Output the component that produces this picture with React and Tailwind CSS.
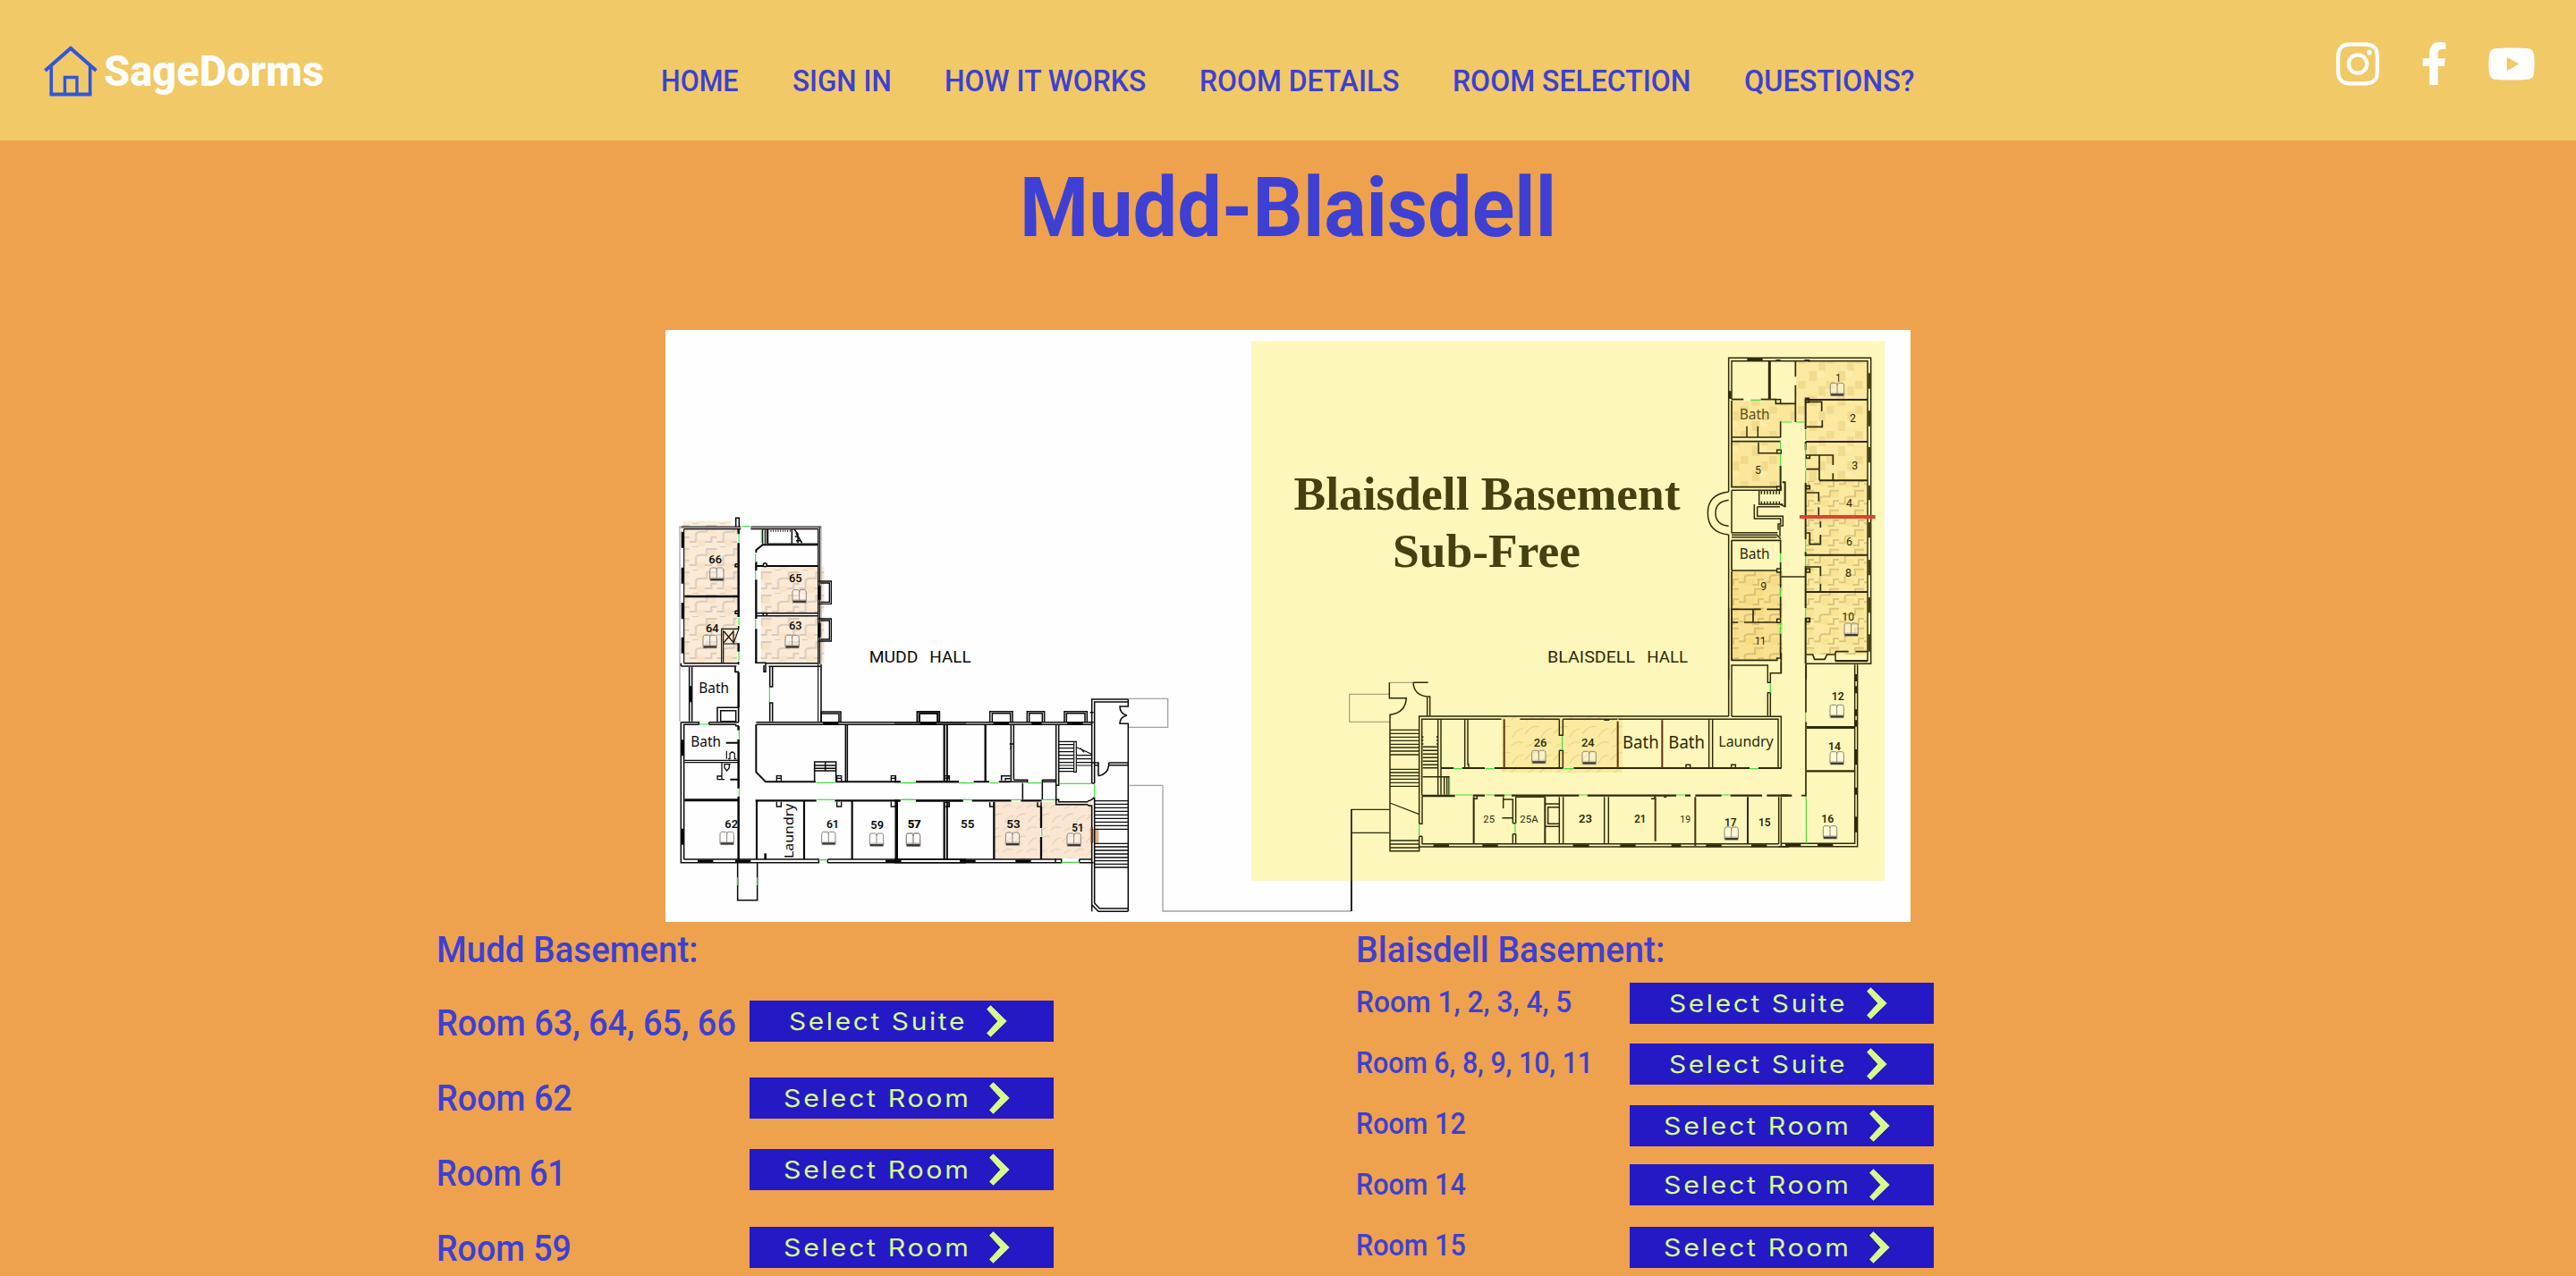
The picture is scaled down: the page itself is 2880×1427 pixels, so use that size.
import React, { useLayoutEffect, useRef, useState } from 'react';
import { FaInstagram, FaFacebookF, FaYoutube } from 'react-icons/fa';

/* A single line of text, condensed or widened to take exactly `width` pixels. */
function Fit({ width, className = '', children }) {
  const ref = useRef(null);
  const [scale, setScale] = useState(1);
  useLayoutEffect(() => {
    setScale(width / ref.current.offsetWidth);
  }, [width]);
  return (
    <span className={`block whitespace-nowrap ${className}`} style={{ width }}>
      <span ref={ref} className="inline-block origin-left" style={{ transform: `scaleX(${scale})` }}>
        {children}
      </span>
    </span>
  );
}

const NAV = [
  { label: 'HOME', width: 87, space: 'ml-[1px]' },
  { label: 'SIGN IN', width: 111, space: 'ml-[60px]' },
  { label: 'HOW IT WORKS', width: 225, space: 'ml-[58.5px]' },
  { label: 'ROOM DETAILS', width: 223, space: 'ml-[60.5px]' },
  { label: 'ROOM SELECTION', width: 266, space: 'ml-[60px]' },
  { label: 'QUESTIONS?', width: 190, space: 'ml-[59.5px]' },
];

const MUDD_ROOMS = [
  ['Room 63, 64, 65, 66', 335],
  ['Room 62', 152],
  ['Room 61', 145],
  ['Room 59', 151],
];

const MUDD_BUTTONS = [
  ['suite', 'mt-[88px]'],
  ['room', 'mt-[40px]'],
  ['room', 'mt-[34px]'],
  ['room', 'mt-[41px]'],
];

const BLAISDELL_ROOMS = [
  ['Room 1, 2, 3, 4, 5', 241.5],
  ['Room 6, 8, 9, 10, 11', 265.5],
  ['Room 12', 123],
  ['Room 14', 123],
  ['Room 15', 123],
];

const BLAISDELL_BUTTONS = [
  ['suite', 'mt-[68px]'],
  ['suite', 'mt-[22px]'],
  ['room', 'mt-[23px]'],
  ['room', 'mt-[20px]'],
  ['room', 'mt-[24px]'],
];

function House() {
  return (
    <svg className="block h-[58px] w-[62px]" viewBox="0 0 62 58" fill="none" stroke="#2f56da" strokeWidth="3.6">
      <path d="M2.5 28 31 3 59.500 28" strokeWidth="4" />
      <path d="M9.300 23V54M52.700 23V54" />
      <path d="M7.500 54.500H54.500" strokeWidth="4" />
      <path d="M24.500 54V35.500H38V54" strokeWidth="3.400" />
    </svg>
  );
}

function Header() {
  return (
    <header className="flex h-[157px] bg-[#f1c967]">
      <div className="flex w-[738px] items-start pl-[48px] pt-[51px]">
        <House />
        <Fit width={246} className="ml-[6px] text-[48px] font-extrabold leading-[58px] text-white">SageDorms</Fit>
      </div>
      <nav className="flex w-[1440px] pt-[70px] text-[34px] font-medium leading-[40px] text-[#3d40d2]">
        {NAV.map((n) => (
          <a key={n.label} className={n.space}>
            <Fit width={n.width}>{n.label}</Fit>
          </a>
        ))}
      </nav>
      <div className="flex h-[142px] items-center pl-[431px] text-white">
        <FaInstagram className="h-[55px] w-[54px]" />
        <FaFacebookF className="ml-[43px] h-[48px] w-[31px]" />
        <FaYoutube className="ml-[44px] h-[55px] w-[54px]" />
      </div>
    </header>
  );
}

function SelectButton({ kind, space }) {
  const suite = kind === 'suite';
  return (
    <button
      className={`flex h-[46px] w-[340px] shrink-0 items-center bg-[#2419c5] text-[#d9f98a] ${space} ${suite ? 'pl-[44px]' : 'pl-[38px]'}`}
    >
      <Fit width={suite ? 199 : 210} className="text-left font-['Inter'] text-[27.5px] font-normal leading-[46px] tracking-[2.4px]">
        {suite ? 'Select Suite' : 'Select Room'}
      </Fit>
      <svg className={`h-[36px] w-[23px] ${suite ? 'ml-[22px]' : 'ml-[20px]'}`} viewBox="0 0 23 36">
        <path d="M4.500.800 22.200 18 4.500 35.200.600 31.400 12.800 18 .600 4.600Z" fill="currentColor" stroke="currentColor" strokeLinejoin="round" />
      </svg>
    </button>
  );
}

function Bed({ x, y }) {
  return (
    <g transform={`translate(${x} ${y})`}>
      <rect x="0" y="32" width="49" height="14" rx="3" fill="#77716a" opacity="0.450" />
      <path d="M1 38V10Q1 1 6 1H20Q24 1 24 8Q24 1 28 1H42Q47 1 47 10V38Z" fill="#fff" fillOpacity="0.350" stroke="#8a867e" strokeWidth="3" />
      <path d="M24 4V36" stroke="#8a867e" strokeWidth="3" />
      <path d="M3 40.500H46" stroke="#35322c" strokeWidth="6" />
    </g>
  );
}

function Carpet({ x, y, w, h, fill, pattern }) {
  return (
    <g>
      <rect x={x} y={y} width={w} height={h} fill={fill} />
      <rect x={x} y={y} width={w} height={h} fill={`url(#${pattern})`} />
    </g>
  );
}

/* Room numbers and captions: [text, left, baseline, width, size, weight] */
function Labels({ items, fill, font }) {
  return items.map(([t, x, y, w, size, weight], i) => (
    <text key={i} x={x} y={y} textLength={w} lengthAdjust="spacingAndGlyphs" fontSize={size} fontWeight={weight} fontFamily={font} fill={fill}>
      {t}
    </text>
  ));
}

const INK = '#0a0a0a';
const OLIVE = '#2e2a08';
const GREEN = '#3fe03f';
const SANS = 'Roboto, sans-serif';
const NOTO = '"Noto Sans", sans-serif';

function MuddWest() {
  const peach = '#fbead6';
  return (
    <g transform="translate(740 560) scale(0.333333)" fill="none" stroke={INK} strokeWidth="4.600">
      <g stroke="none">
        <Carpet x={70} y={68} w={162} h={28} fill="#fbeee0" pattern="step" />
        <Carpet x={76} y={96} w={176} h={222} fill={peach} pattern="step" />
        <Carpet x={76} y={324} w={176} h={220} fill={peach} pattern="step" />
        <Carpet x={332} y={222} w={212} h={154} fill={peach} pattern="step" />
        <Carpet x={332} y={388} w={212} h={154} fill={peach} pattern="step" />
      </g>
      <path d="M60 84V740M534 86V548" stroke="#b9b4b4" />
      <path d="M64 91H265M298 91H534" stroke="#b9a9b0" strokeWidth="6" />
      <path d="M64 87H265M74 95H265M298 87H534M298 95H524" strokeWidth="3.500" />
      <path d="M74 95V545M524 95V740M529 90V548" strokeWidth="3.500" />
      <path d="M534 548V740M64 555H250M74 545H258M64 545V555M92 558V740M101 558V740" />
      <path d="M69 104V158M69 224V278M69 342V397M69 458V512M97 622V676M69 802V856M69 1100V1154" strokeWidth="8" />
      <path d="M248 88V58H259V88" />
      <path d="M257 96V112M257 142V390M257 478V506M257 575V694M257 756V770M257 800V965M257 992V1205" strokeWidth="7.500" />
      <path d="M257 430V420M257 540V550M246 556V574H258M257 694V742" strokeWidth="5" />
      <path d="M76 321H257" strokeWidth="8" />
      <path d="M246 212H257M246 212V221H257M246 370H257M246 370V379H257" />
      <path d="M258 430H200V545M206 436V545M206 480H258M240 434V478L258 430M208 438L240 476M240 438L208 476" strokeWidth="3.500" />
      <path d="M338 96V146M346 96V146M352 96V144M356 96V144H524" strokeWidth="3.500" />
      <path d="M366 98V104M374 98V104M382 98V104M390 98V104M398 98V104M406 98V104M414 98V104M422 98V104M430 98V104" strokeWidth="3" />
      <path d="M436 96V144M444 96 456 112V142M450 108 470 142M446 120H458M450 134H464" />
      <path d="M316 174V166L338 148H524" strokeWidth="6" />
      <path d="M316 205V234M316 265V396M316 430V545" strokeWidth="7" />
      <path d="M316 219H524" strokeWidth="6" />
      <circle cx="346" cy="215" r="6" fill="#fff" />
      <path d="M316 377H524M316 386H524M340 377V386M352 377V386" />
      <path d="M313 544H348V574H342V552M350 545H524M358 556H534M362 556V624H371V556M362 740V678H371V740" />
      <path d="M526 270H568V346H526M532 276H562V340H532M526 396H568V471H526M532 402H562V465H532" strokeWidth="4" />
      <path d="M529 285V332M529 410V458" strokeWidth="8" />
      <path d="M186 742V694H258M197 740V704H248V740H197" />
      <path d="M64 743H124V751H74V1203M64 743V1214H526V1203H74M158 743H258M158 751H250M158 743V751M246 755H258" />
      <path d="M215 812H258M229 935H258" strokeWidth="6" />
      <path d="M217 840V866M228 866V848L236 842 244 848V866M222 866H230M242 866H250" strokeWidth="3.500" />
      <path d="M76 871H257M76 878H257M201 880V935M186 935V924H201M186 935H210M208 884H230M210 886V896L218 906 226 896V886" strokeWidth="3.800" />
      <path d="M76 1004H257" strokeWidth="9" />
      <path d="M120 1209H172M246 1209H298M750 1209H802M1000 1209H1020" strokeWidth="9" />
      <path d="M254 1214V1340H320V1214" />
      <path d="M347 1183V1203" strokeWidth="8" />
      <path d="M316 743H1020M316 751H1020M534 743V708H600V743M536 714H594V742M857 743V708H931V743M864 743V714H925V743" />
      <path d="M540 747H592M867 747H920" strokeWidth="8" />
      <path d="M316 751V910L348 943H516" strokeWidth="6" />
      <path d="M616 751V943M622 751V943M948 751V943M957 751V943" />
      <path d="M512 943V876H584V943M514 888H582M514 898H582M514 906H582M548 878V906" />
      <path d="M385 941V923H400V941M385 931H400M587 941V923H602V941M587 931H602M769 941V923H784V941M769 931H784M948 941V923H963V931H950M385 1010V1026H400V1010M587 1010V1026H602V1010M769 1010V1026H784V1010M950 1012H963V1026H950" strokeWidth="4" />
      <path d="M582 943H800M852 943H996" strokeWidth="6" />
      <path d="M314 1006H518M580 1006H800M852 1006H1010" strokeWidth="7" />
      <path d="M318 1006V1203M477 1006V1203M638 1006V1203" strokeWidth="6.500" />
      <path d="M788 1006V1203" strokeWidth="8" />
      <path d="M948 1010V1203M957 1010V1203M556 1203H1020M556 1214H1020M556 1203V1214" />
      <path
        d="M270 86H294M258 110V140M258 392V418M258 506V538M334 98V142M314 176V206M314 234V264M314 398V428M361 626V676M124 750H158M259 770V798M259 965V992M518 946H580M802 946H852M996 946H1020M520 1003H580M802 1003H852M1010 1003H1020M526 1205H556M254 1264V1290M320 1264V1290"
        stroke={GREEN}
        strokeWidth="3.500"
      />
      <g stroke="none">
        <Bed x={160} y={224} />
        <Bed x={137} y={450} />
        <Bed x={437} y={298} />
        <Bed x={413} y={450} />
        <Bed x={194} y={1110} />
        <Bed x={535} y={1110} />
        <Bed x={696} y={1115} />
        <Bed x={819} y={1115} />
        <Labels
          fill={INK}
          font={SANS}
          items={[
            ['66', 157, 210, 44, 36, 500],
            ['65', 426, 272, 44, 36, 500],
            ['64', 147, 441, 44, 36, 500],
            ['63', 426, 431, 44, 36, 500],
            ['62', 211, 1099, 44, 36, 600],
            ['61', 552, 1099, 42, 36, 600],
            ['59', 700, 1101, 44, 36, 600],
            ['57', 824, 1099, 44, 36, 600],
          ]}
        />
        <Labels fill={INK} font={NOTO} items={[['Bath', 124, 645, 101, 46, 400], ['Bath', 97, 824, 101, 46, 400]]} />
        <text transform="translate(442 1200) rotate(-90)" textLength="184" lengthAdjust="spacingAndGlyphs" fontSize="44" fontFamily={NOTO} fill={INK}>
          Laundry
        </text>
      </g>
    </g>
  );
}

function MuddEast() {
  return (
    <g transform="translate(1000 700) scale(0.333333)" fill="none" stroke={INK} strokeWidth="4.600">
      <g stroke="none">
        <Carpet x={338} y={590} w={152} h={190} fill="#fbe7d1" pattern="swirl" />
        <Carpet x={496} y={590} w={166} h={190} fill="#fbe7d1" pattern="swirl" />
        <rect x="663" y="680" width="22" height="48" fill="#d9b18c" />
      </g>
      <path d="M784 244H917V340H784M788 535H900V957H1532" stroke="#a3a3a3" strokeWidth="4" />
      <path d="M1532 957V615" strokeWidth="4" />
      <path d="M0 323H668M0 331H662M76 323V287H151V323M84 323V293H144V323M320 323V287H396V323M328 323V293H389V323M445 323V287H503V323M452 323V293H496V323M570 323V287H646V323M577 323V293H639V323" />
      <path d="M88 327H140M332 327H384M460 327H494M580 327H632" strokeWidth="8" />
      <path d="M166 331V523M176 331V523M391 331V521M400 331V515M542 331V590M551 331V535H544M656 290H668" />
      <path d="M305 331V523" strokeWidth="7" />
      <path d="M386 396H400M391 402V415" />
      <path d="M0 508H4V520M176 503H184V518M359 518V503H389M372 518V512H389" />
      <path d="M0 523H20M72 523H216M266 523H318M350 523H391" strokeWidth="6" />
      <path d="M391 523H446V517H400M496 523H542M496 517H542M496 517V583M430 527V583" />
      <path d="M0 586H20M72 586H230M260 586H392M424 586H494" strokeWidth="7" />
      <path d="M551 388H600M551 398H600M551 410H600M551 422H600M551 434H600M551 446H600M551 458H600M551 468H600M551 478H600M551 488H600M602 388H610V490H602ZM612 434H660M612 446H660M612 458H660M612 468H662M612 408 640 420 660 430M624 410 636 424" strokeWidth="3.500" />
      <path d="M662 528V246H784M671 528V255H784M662 528H671" />
      <path d="M784 246V270H756Q756 294 780 300Q756 306 756 328H784V957" />
      <path d="M662 459H684V503M671 467H682M684 503Q716 498 719 467M719 459H784M719 459V467H784" />
      <path d="M542 583H551V590H648M542 583V599H646L652 603H662V958M671 575V930L688 948H784M662 935 684 958H784M671 575 660 584 648 588" />
      <path d="M671 587H784M671 598H784M671 610H784M671 622H784M671 634H784M671 646H784M671 658H784M671 670H784M671 682H784M671 730H784M671 741H784M671 753H784M671 765H784M671 777H784M671 788H784M671 799H784M671 810H784" strokeWidth="3.800" />
      <path d="M6 590V782" strokeWidth="9" />
      <path d="M166 590V782M176 590V782M176 606H184V592M320 592V606H332M480 592V606H492V592" />
      <path d="M334 590V782M492 606V678M492 708V782" strokeWidth="7" />
      <path d="M662 676V728" stroke="#5a2a10" strokeWidth="6" />
      <path d="M0 783H560V794H0M620 783H662M620 794H668M620 783V794M540 780V796" />
      <path d="M0 789H22M220 789H272M406 789H458" strokeWidth="9" />
      <path d="M20 527H70M216 527H266M320 527H348M446 527H494M553 529H660M20 583H70M230 583H260M392 583H424M498 583H540M671 532V576M494 680V706M560 793H620" stroke={GREEN} strokeWidth="3.500" />
      <g stroke="none">
        <Bed x={39} y={695} />
        <Bed x={372} y={692} />
        <Bed x={578} y={695} />
        <Labels
          fill={INK}
          font={SANS}
          items={[
            ['57', 44, 679, 45, 36, 600],
            ['55', 222, 679, 46, 36, 600],
            ['53', 376, 679, 46, 36, 600],
            ['51', 595, 689, 40, 36, 600],
            ['HALL', 118, 122, 139, 56, 400],
            ['MUDD', -85, 122, 164, 56, 400],
          ]}
        />
      </g>
    </g>
  );
}

function BlaisdellSouth() {
  return (
    <g transform="translate(1480 680) scale(0.333333)" fill="none" stroke={OLIVE} strokeWidth="4.400">
      <g stroke="none">
        <Carpet x={598} y={362} w={404} h={190} fill="#fbeaa0" pattern="swirlGold" />
      </g>
      <path d="M220 289H86V382H220M220 250H300" stroke="#aaa67c" strokeWidth="4" />
      <path d="M93 915V676H220M93 754H220" strokeWidth="4" />
      <path d="M93 915V1017" stroke={INK} strokeWidth="4" />
      <path d="M220 250V302H277Q274 352 222 358V815H320V801M300 250H350M300 250Q302 292 346 297H356V362M347 300V362" />
      <path d="M222 409H320M222 421H320M222 433H320M222 445H320M222 457H320M222 468H320M222 480H320M222 492H320M222 541H320M222 552H320M222 563H320M222 574H320M222 586H320M222 598H320M222 654 320 692M222 780H320M222 792H320M222 804H320" strokeWidth="3.800" />
      <path d="M320 724V363H1358M329 628V373H596M320 724H330V632M658 373H790M802 373H985M988 373H1524V536H1534V364H1368M1358 363V0M1368 174V0M320 766V801H1560M330 766V791H1526M320 766H330" />
      <path d="M383 373V626M393 373V626M473 373V536M483 373V524H486V536M332 466H382M332 478H382M332 490H382M332 502H382M332 514H382M332 526H382M332 536H382M332 430V436M380 430V436M332 442V446M380 442V446M332 454V458M380 454V458M332 566H422M404 566V626M413 566V626M420 566V626" />
      <path d="M393 537H436M464 537H540M572 537H802M838 537H1428M1458 537H1534" strokeWidth="6" />
      <path d="M605 373V537M986 380V537M1135 376V537" stroke="#5b3510" strokeWidth="6" />
      <path d="M790 373V427H802V373M790 478H802V537M790 478V537M940 376H958M1292 373V537M1304 373V537M1215 536V526H1229V536M1367 536V526H1381V536" />
      <path d="M329 630H440M500 629H540M572 629H606M630 629H856M884 629H1182M1212 629H1230M1246 629H1334M1364 629H1470M1486 629H1560" strokeWidth="7" />
      <path d="M503 634V791M1422 634V791M742 634V791" strokeWidth="6" />
      <path d="M503 640H514V630M602 634V672M602 642H634V722M644 634H742M644 634V722M634 722H644M598 704H634M634 758V791M644 758V791M634 758H644M742 657H790M742 733H790M752 668H790V724H752ZM790 634V791M803 634V791M941 634V791M955 634V791M1098 640H1110V630M1140 634H1150M1526 634V791M1534 634V801" />
      <path d="M1112 634V782M1246 634V798" stroke="#4a3010" strokeWidth="6" />
      <path d="M368 797H420M532 797H584M836 797H890M994 797H1046M1166 797H1198M1282 797H1334M1434 797H1486M1548 797H1560" strokeWidth="9" />
      <path d="M1368 363V192H1489V250H1498V218H1534V180M1489 362V284H1498V362" />
      <path d="M436 539H464M542 539H572M804 539H838M1428 539H1458M422 568V624M440 627H498M542 627H572M606 627H630M856 627H884M1182 627H1212M1334 627H1364M320 726V764M642 724V756M800 430V478M1498 252V284" stroke={GREEN} strokeWidth="3.500" />
      <g stroke="none">
        <Bed x={697} y={477} />
        <Bed x={866} y={480} />
        <Bed x={1343} y={734} />
        <Labels
          fill={OLIVE}
          font={SANS}
          items={[
            ['26', 704, 464, 44, 36, 500],
            ['24', 864, 464, 44, 36, 500],
            ['25', 535, 719, 38, 34, 400],
            ['25A', 658, 719, 61, 34, 400],
            ['23', 855, 719, 45, 36, 600],
            ['21', 1042, 721, 39, 36, 600],
            ['19', 1195, 721, 35, 34, 400],
            ['17', 1344, 732, 41, 36, 600],
            ['15', 1458, 732, 41, 36, 600],
            ['BLAISDELL', 750, 183, 294, 56, 400],
            ['HALL', 1084, 183, 137, 56, 400],
          ]}
        />
        <Labels
          fill={OLIVE}
          font={NOTO}
          items={[
            ['Bath', 1002, 472, 122, 58, 400],
            ['Bath', 1156, 472, 122, 58, 400],
            ['Laundry', 1324, 464, 184, 47, 400],
          ]}
        />
      </g>
    </g>
  );
}

function BlaisdellNorth() {
  const gold = '#fbe99f';
  return (
    <g transform="translate(1860 370) scale(0.333333)" fill="none" stroke={OLIVE} strokeWidth="4.400">
      <g stroke="none">
        <Carpet x={444} y={102} w={240} h={130} fill={gold} pattern="soft" />
        <Carpet x={444} y={230} w={34} h={78} fill={gold} pattern="soft" />
        <Carpet x={478} y={232} w={206} h={272} fill={gold} pattern="soft" />
        <Carpet x={478} y={504} w={206} h={372} fill={gold} pattern="stepGold" />
        <Carpet x={478} y={876} w={206} h={210} fill={gold} pattern="stepGold" />
        <Carpet x={230} y={234} w={160} h={124} fill="#fbe79a" pattern="soft" />
        <Carpet x={390} y={246} w={50} h={58} fill="#fbe79a" pattern="soft" />
        <Carpet x={230} y={374} w={160} h={150} fill="#fbe79a" pattern="soft" />
        <Carpet x={230} y={806} w={168} h={298} fill="#fae190" pattern="stepGold" />
      </g>
      <path d="M218 540V91H695V1117H478V1170M218 684V1170M228 230V101H684V1106H576V1076" />
      <path d="M218 540Q148 548 148 611Q148 676 218 684M218 568Q174 574 174 611Q174 650 218 655" />
      <path d="M228 230H268M326 230H354M228 234V524H382M228 357H392M228 371H392M353 101V230M357 101V230H376V244H442M442 101V154M442 182V306M392 304V358" strokeWidth="5" />
      <path d="M376 230H392V244M376 98H392M472 98H488V104M279 320V357M316 320V357M318 374V410H380M380 400H394V411H380ZM380 522H394V534H380Z" />
      <path d="M392 452V536M407 506V592M398 508H409M392 508V536" strokeWidth="6" />
      <path d="M228 535V677H382M228 535H392M320 535V582H400M328 537V548M338 537V548M348 537V548M358 537V548M368 537V548M378 537V548M388 537V548M328 572V582M338 572V582M348 572V582M358 572V582M368 572V582M378 572V582M388 572V582M390 582 408 590M314 590H390M304 582V630H392V648H384V668M314 590V622H400V654H390V690M228 685H380L392 698M228 692H380" />
      <path d="M228 703H392V746M228 804H380M228 703V804M228 806V1105H380V1098H394M392 776V800M392 1016V1098M392 806V862M392 892V964" strokeWidth="5" />
      <path d="M380 798H392V810H380ZM380 967H392V979H380Z" />
      <path d="M228 934H326M346 934H392M300 936V978M228 978H250M270 978H380" strokeWidth="5" />
      <path d="M394 825H475" />
      <path d="M478 231H684M476 372H684M522 502H684M476 752H684M476 876H684" strokeWidth="6" />
      <path d="M476 228V330M476 372V400M476 510V700M476 742V756M476 788V930M476 962V1117" strokeWidth="6" />
      <path d="M476 226H487V240H476ZM480 238H530V270M480 322H532V300M478 417H490V427H478ZM490 417H568V450M522 417V502M478 464H522M568 478V502M478 520H490V530H478ZM480 543H520V572M520 592V620M478 678H490V716H526V684M526 640V660M478 798H490V810H478ZM480 792H526V822M526 848V876M478 964H490V976H478ZM478 1086H500L506 1102H540L548 1086H576M576 1108H684M576 1076H620M644 1076H684" strokeWidth="5" />
      <path d="M690 142V194M690 268V320M690 390V442M690 518V568M690 642V694M690 768V820M690 894V946M690 1018V1076" strokeWidth="10" stroke="#4a4414" />
      <path d="M280 96H332M222 202V228" strokeWidth="9" />
      <path d="M292 232H326M396 306H430M444 306H474M392 374V400M392 414V450M476 332V366M476 378V414M476 428V460M476 468V510M392 746V776M392 864V892M392 980V1014M476 700V742M476 756V788M476 930V962" stroke={GREEN} strokeWidth="3.500" />
      <path d="M456 624H710" stroke="#e2402c" strokeWidth="12" />
      <g stroke="none">
        <Bed x={558} y={174} />
        <Bed x={605} y={980} />
        <Labels
          fill={OLIVE}
          font={SANS}
          items={[
            ['1', 577, 171, 18, 36, 400],
            ['2', 624, 307, 21, 36, 400],
            ['3', 631, 466, 21, 36, 400],
            ['4', 612, 592, 21, 36, 400],
            ['5', 306, 480, 21, 36, 400],
            ['6', 612, 719, 21, 36, 400],
            ['8', 609, 824, 21, 36, 400],
            ['9', 325, 870, 21, 36, 400],
            ['10', 598, 973, 41, 36, 400],
            ['11', 305, 1053, 38, 36, 400],
          ]}
        />
        <Labels fill="#55501c" font={NOTO} items={[['Bath', 254, 296, 102, 47, 400]]} />
        <Labels fill={OLIVE} font={NOTO} items={[['Bath', 254, 765, 102, 47, 400]]} />
      </g>
    </g>
  );
}

function BlaisdellEast() {
  return (
    <g transform="translate(1880 700) scale(0.333333)" fill="none" stroke={OLIVE} strokeWidth="4.400">
      <path d="M334 90V158M417 130V290M417 322V572M402 569H417" strokeWidth="5" />
      <path d="M581 130V730H334M590 130V740H326M420 338H581M420 343H581" />
      <path d="M420 487H581" strokeWidth="7" />
      <path d="M334 569H370" strokeWidth="7" />
      <path d="M586 162V186M586 202V226M586 280V302M586 316V338M586 414V466M586 542V566M586 640V692M348 736H400M456 736H508" strokeWidth="9" />
      <path d="M416 292V322M418 574V730" stroke={GREEN} strokeWidth="3.500" />
      <g stroke="none">
        <Bed x={497} y={264} />
        <Bed x={497} y={421} />
        <Bed x={474} y={670} />
        <Labels
          fill={OLIVE}
          font={SANS}
          items={[
            ['12', 503, 248, 42, 36, 600],
            ['14', 492, 417, 42, 36, 600],
            ['16', 469, 659, 42, 36, 600],
          ]}
        />
      </g>
    </g>
  );
}

function FloorPlan() {
  return (
    <svg className="block h-[662px] w-[1392px]" viewBox="744 369 1392 662">
      <defs>
        <pattern id="step" width="92" height="78" patternUnits="userSpaceOnUse">
          <path d="M0 60H22V34Q24 26 40 26H58V6H92M10 78H30M52 60H74V44H92" fill="none" stroke="#a89a98" strokeOpacity="0.400" strokeWidth="6" />
          <path d="M26 52H52V74H26ZM60 10H88V32H60Z" fill="#f6d3a8" fillOpacity="0.350" />
        </pattern>
        <pattern id="stepGold" width="84" height="66" patternUnits="userSpaceOnUse">
          <path d="M0 52H20V34Q22 28 34 28H54V8H84M46 60H66V42H84" fill="none" stroke="#a68f45" strokeOpacity="0.380" strokeWidth="6" />
          <path d="M24 40H50V62H24ZM56 12H82V32H56Z" fill="#f3c95c" fillOpacity="0.220" />
        </pattern>
        <pattern id="soft" width="96" height="84" patternUnits="userSpaceOnUse">
          <path d="M8 50H34V84H8ZM40 18H62V52H40ZM66 0H92V26H66Z" fill="#c9a74e" fillOpacity="0.200" />
          <path d="M34 48H58V70H34Z" fill="#fff2b8" fillOpacity="0.500" />
        </pattern>
        <pattern id="swirl" width="80" height="74" patternUnits="userSpaceOnUse">
          <path d="M4 60Q20 34 40 40M44 20Q58 2 76 12M10 22 30 10M50 68Q60 44 78 46" fill="none" stroke="#a9a098" strokeOpacity="0.400" strokeWidth="3" />
        </pattern>
        <pattern id="swirlGold" width="96" height="88" patternUnits="userSpaceOnUse">
          <path d="M4 70Q24 40 50 46M52 24Q70 4 92 12M8 26 34 12M56 82Q70 54 92 52" fill="none" stroke="#b59a5a" strokeOpacity="0.350" strokeWidth="3" />
        </pattern>
      </defs>
      <rect x="744" y="369" width="1392" height="662" fill="#fefefe" />
      <rect x="1399" y="381.500" width="708" height="603.300" fill="#fdf7bb" />
      <MuddWest />
      <MuddEast />
      <BlaisdellSouth />
      <BlaisdellNorth />
      <BlaisdellEast />
      <g fontFamily='"Liberation Serif", serif' fontWeight="700" fontSize="53" fill="#464010">
        <text x="1446.500" y="569.500" textLength="432" lengthAdjust="spacingAndGlyphs">Blaisdell Basement</text>
        <text x="1557" y="634" textLength="210" lengthAdjust="spacingAndGlyphs">Sub-Free</text>
      </g>
    </svg>
  );
}

function Rooms({ rooms, className }) {
  return (
    <ul className={className}>
      {rooms.map(([label, width]) => (
        <li key={label} className="flex flex-1 items-center">
          <Fit width={width}>{label}</Fit>
        </li>
      ))}
    </ul>
  );
}

export default function App() {
  return (
    <div className="h-[1427px] w-[2880px] overflow-hidden bg-[#eea24e] font-['Roboto',sans-serif]">
      <Header />
      <main>
        <h1 className="flex h-[154px] justify-center text-[92px] font-bold leading-[152px] text-[#3d40d2]">
          <Fit width={600}>Mudd-Blaisdell</Fit>
        </h1>
        <div className="mt-[58px] pl-[744px]">
          <FloorPlan />
        </div>
        <div className="flex items-start pl-[488px] font-medium text-[#3d40d2]">
          <section className="w-[350px]">
            <h2 className="h-[72px] text-[40px] leading-[64px]">
              <Fit width={292}>Mudd Basement:</Fit>
            </h2>
            <Rooms rooms={MUDD_ROOMS} className="flex h-[336px] flex-col text-[40px] leading-[48px]" />
          </section>
          <div className="flex w-[678px] flex-col">
            {MUDD_BUTTONS.map(([kind, space], i) => (
              <SelectButton key={i} kind={kind} space={space} />
            ))}
          </div>
          <section className="w-[306px]">
            <h2 className="h-[55px] text-[40px] leading-[64px]">
              <Fit width={345}>Blaisdell Basement:</Fit>
            </h2>
            <Rooms rooms={BLAISDELL_ROOMS} className="flex h-[340px] flex-col text-[34px] leading-[44px]" />
          </section>
          <div className="flex flex-col">
            {BLAISDELL_BUTTONS.map(([kind, space], i) => (
              <SelectButton key={i} kind={kind} space={space} />
            ))}
          </div>
        </div>
      </main>
    </div>
  );
}
